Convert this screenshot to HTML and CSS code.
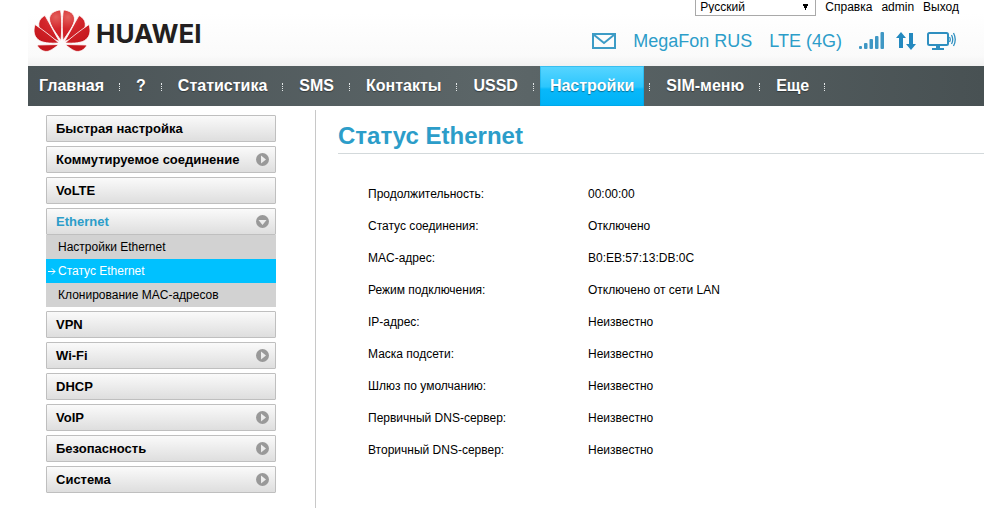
FILE: index.html
```html
<!doctype html>
<html lang="ru">
    <head>
        <meta charset="UTF-8" />
        <meta name="viewport" content="width=device-width, initial-scale=1" />
        <title>Статус Ethernet</title>
        <link rel="stylesheet" href="styles.css" />
    </head>
    <body>
        <header class="header">
            <a class="logo" href="#">
                <svg class="logo-mark" viewBox="0 0 56 44" width="56" height="44" aria-hidden="true">
                    <defs>
                        <radialGradient id="petal" gradientUnits="userSpaceOnUse" cx="22" cy="8" r="30">
                            <stop offset="0" stop-color="#e4605c" />
                            <stop offset="0.4" stop-color="#d3262c" />
                            <stop offset="1" stop-color="#c4161c" />
                        </radialGradient>
                    </defs>
                    <g id="petals" fill="url(#petal)" stroke="#fff" stroke-width="0.800">
                        <path d="M27 31.500C22 24 15.500 16 15.500 10C15.500 5 20 1.500 26.500 1C28 9 28 20 27 31.500Z" />
                        <path d="M25.500 32.500C21 25 16 15 11 6.500C6 9 4 13 5 18C7 24 15 28.500 25.500 32.500Z" />
                        <path d="M25 34C17 27 9 21 1 15.500C-1 22 0 27 4 30.500C8 34 16 34.500 25 34Z" />
                        <path d="M25 35.500L3 36C5.500 41 10.500 43.500 15 42C18.500 40.500 21.500 38 25 35.500Z" />
                    </g>
                    <use href="#petals" transform="translate(56 0) scale(-1 1)" />
                </svg>
                <span class="logo-text">HUAWEI</span>
            </a>
            <div class="header-right">
                <div class="user-bar">
                    <select class="language" aria-label="Язык">
                        <option>Русский</option>
                        <option>English</option>
                    </select>
                    <a href="#">Справка</a>
                    <a href="#">admin</a>
                    <a href="#">Выход</a>
                </div>
                <div class="status-bar">
                    <svg width="24" height="16" viewBox="0 0 24 16" fill="none" stroke="#3d9cc6" stroke-width="2" aria-hidden="true">
                        <path d="M1 1H23V15H1ZM1.500 1.500L12 10L22.500 1.500" />
                    </svg>
                    <span>MegaFon RUS</span>
                    <span>LTE (4G)</span>
                    <div class="status-icons">
                        <svg width="26" height="18" viewBox="0 0 26 18" fill="#3f97c4" aria-hidden="true">
                            <rect x="0" y="14" width="3" height="3" rx="1" />
                            <rect x="5" y="11" width="3.500" height="6" rx="1" />
                            <rect x="10.500" y="7" width="3.500" height="10" rx="1" />
                            <rect x="16" y="4" width="3.500" height="13" rx="1" />
                            <rect x="21.500" y="0" width="3.500" height="17" rx="1" />
                        </svg>
                        <svg width="20" height="18" viewBox="0 0 20 18" fill="#2489bf" aria-hidden="true">
                            <path d="M5 0L10 6H7V16H3V6H0Z" />
                            <path d="M15 18L10 12H13V1H17V12H20Z" />
                        </svg>
                        <svg width="29" height="18" viewBox="0 0 29 18" fill="none" stroke="#2f8fc0" aria-hidden="true">
                            <rect x="1" y="1" width="20" height="12" rx="1.500" stroke-width="2" />
                            <path d="M5 17H17M9 15H13" stroke-width="2" />
                            <path d="M22.500 5Q24 7.500 22.500 10M24.500 3Q27 7.500 24.500 12M26.500 1Q30 7.500 26.500 14" stroke-width="1.300" />
                        </svg>
                    </div>
                </div>
            </div>
        </header>

        <nav class="main-nav">
            <a href="#">Главная</a>
            <a href="#">?</a>
            <a href="#">Статистика</a>
            <a href="#">SMS</a>
            <a href="#">Контакты</a>
            <a href="#">USSD</a>
            <a class="active" href="#">Настройки</a>
            <a href="#">SIM-меню</a>
            <a href="#">Еще</a>
        </nav>

        <div class="layout">
            <aside class="sidebar">
                <a class="menu-item" href="#">Быстрая настройка</a>
                <a class="menu-item has-children" href="#">Коммутируемое соединение</a>
                <a class="menu-item" href="#">VoLTE</a>
                <div class="menu-group">
                    <a class="menu-item has-children open" href="#">Ethernet</a>
                    <div class="submenu">
                        <a href="#">Настройки Ethernet</a>
                        <a class="current" href="#">
                            <svg width="8" height="7" viewBox="0 0 8 7" fill="none" stroke="#fff" aria-hidden="true">
                                <path d="M0 3.500H7M4 0.500L7 3.500L4 6.500" />
                            </svg>
                            Статус Ethernet
                        </a>
                        <a href="#">Клонирование MAC-адресов</a>
                    </div>
                </div>
                <a class="menu-item" href="#">VPN</a>
                <a class="menu-item has-children" href="#">Wi-Fi</a>
                <a class="menu-item" href="#">DHCP</a>
                <a class="menu-item has-children" href="#">VoIP</a>
                <a class="menu-item has-children" href="#">Безопасность</a>
                <a class="menu-item has-children" href="#">Система</a>
            </aside>

            <main class="content">
                <h1>Статус Ethernet</h1>
                <table class="status">
                    <tbody>
                        <tr><th scope="row">Продолжительность:</th><td>00:00:00</td></tr>
                        <tr><th scope="row">Статус соединения:</th><td>Отключено</td></tr>
                        <tr><th scope="row">MAC-адрес:</th><td>B0:EB:57:13:DB:0C</td></tr>
                        <tr><th scope="row">Режим подключения:</th><td>Отключено от сети LAN</td></tr>
                        <tr><th scope="row">IP-адрес:</th><td>Неизвестно</td></tr>
                        <tr><th scope="row">Маска подсети:</th><td>Неизвестно</td></tr>
                        <tr><th scope="row">Шлюз по умолчанию:</th><td>Неизвестно</td></tr>
                        <tr><th scope="row">Первичный DNS-сервер:</th><td>Неизвестно</td></tr>
                        <tr><th scope="row">Вторичный DNS-сервер:</th><td>Неизвестно</td></tr>
                    </tbody>
                </table>
            </main>
        </div>
    </body>
</html>
```
FILE: styles.css
```css
:root {
    --blue: #2c9dc9;
    --cyan: #00c1ff;
    --line: #c8c8c8;
}

* {
    box-sizing: border-box;
}

body {
    display: flex;
    flex-direction: column;
    min-height: 100vh;
    margin: 0;
    padding: 0 23px 0 28px;
    background: #fff;
    color: #000;
    font-family: "Liberation Sans", Arial, Helvetica, sans-serif;
    font-size: 12px;
}

a {
    color: inherit;
    text-decoration: none;
}

/* Header */
.header {
    display: flex;
    justify-content: space-between;
    height: 66px;
    background: linear-gradient(#fff 20%, #fafafa 85%, #f1f1f1);
}

.logo {
    display: flex;
    align-items: center;
    gap: 6px;
    padding: 0 0 4px 6px;
}

.logo-text {
    padding-top: 6px;
    color: #231f20;
    font-family: Inter, "Liberation Sans", sans-serif;
    font-size: 26px;
    font-weight: 700;
    line-height: 30px;
}

.header-right {
    display: flex;
    flex-direction: column;
    align-items: flex-end;
}

.user-bar {
    display: flex;
    gap: 9px;
    padding-right: 25px;
    line-height: 14px;
}

.language {
    appearance: none;
    width: 121px;
    height: 16px;
    padding: 0 4px 2px;
    border: 1px solid #a9a9a9;
    border-top: 0;
    border-radius: 0;
    /* drop-down arrow */
    background: conic-gradient(from -27deg at 50% 100%, #000 54deg, transparent 0) right 6px top 4px / 7px 6px no-repeat #fff;
    color: #000;
    font: inherit;
}

.status-bar {
    display: flex;
    align-items: center;
    gap: 17px;
    padding: 14px 28px 0 0;
    color: var(--blue);
    font-size: 18px;
    line-height: 22px;
}

.status-icons {
    display: flex;
    gap: 11px;
}

/* Main navigation */
.main-nav {
    display: flex;
    height: 40px;
    padding-left: 1px;
    background: linear-gradient(90deg, #4a5356, #5c6668 50%, #485153);
    color: #fff;
    font-size: 16px;
    font-weight: bold;
    line-height: 39px;
}

.main-nav a {
    position: relative;
    margin-right: 12px;
    padding: 0 10px;
    text-shadow: 0 1px 1px rgba(0, 0, 0, 0.4);
}

.main-nav a::after {
    content: "";
    position: absolute;
    top: 17px;
    right: -6px;
    height: 8px;
    border-left: 1px dotted #e4e8e9;
}

.main-nav .active {
    background: linear-gradient(#58d5ff, #2cc6fd 52%, #08b8fa 58%, #00b2f6);
    box-shadow: inset 0 0 0 1px rgba(0, 150, 210, 0.35);
}

/* Columns */
.layout {
    display: flex;
    flex: 1;
    padding-top: 4px;
}

.sidebar {
    display: flex;
    flex-direction: column;
    gap: 4px;
    width: 288px;
    padding: 5px 39px 15px 18px;
    border-right: 1px solid var(--line);
}

.menu-item {
    display: flex;
    align-items: center;
    justify-content: space-between;
    height: 27px;
    padding: 0 6px 0 9px;
    border: 1px solid #bfbfbf;
    border-radius: 1px;
    background: linear-gradient(#fafafa, #dedede);
    font-size: 13px;
    font-weight: bold;
}

.has-children::after {
    content: "";
    width: 13px;
    height: 13px;
    border-radius: 50%;
    background: #999;
    clip-path: path(evenodd, "M0 0H13V13H0ZM5 2.500V10.500L10 6.500Z");
}

.open {
    color: var(--blue);
}

.open::after {
    transform: rotate(90deg);
}

.submenu a {
    position: relative;
    display: block;
    padding-left: 12px;
    background: #d2d2d2;
    line-height: 24px;
}

.submenu .current {
    background: var(--cyan);
    color: #fff;
}

.submenu svg {
    position: absolute;
    top: 9px;
    left: 2px;
}

.content {
    flex: 1;
    padding-left: 22px;
}

h1 {
    margin: 0;
    padding: 11px 0 3px;
    border-bottom: 1px solid #d3d9db;
    color: var(--blue);
    font-size: 24px;
    line-height: 29px;
}

.status {
    margin: 24px 0 0 30px;
    border-collapse: collapse;
}

.status th,
.status td {
    height: 32px;
    padding: 0;
    font-weight: normal;
    text-align: left;
}

.status th {
    width: 220px;
}
```
